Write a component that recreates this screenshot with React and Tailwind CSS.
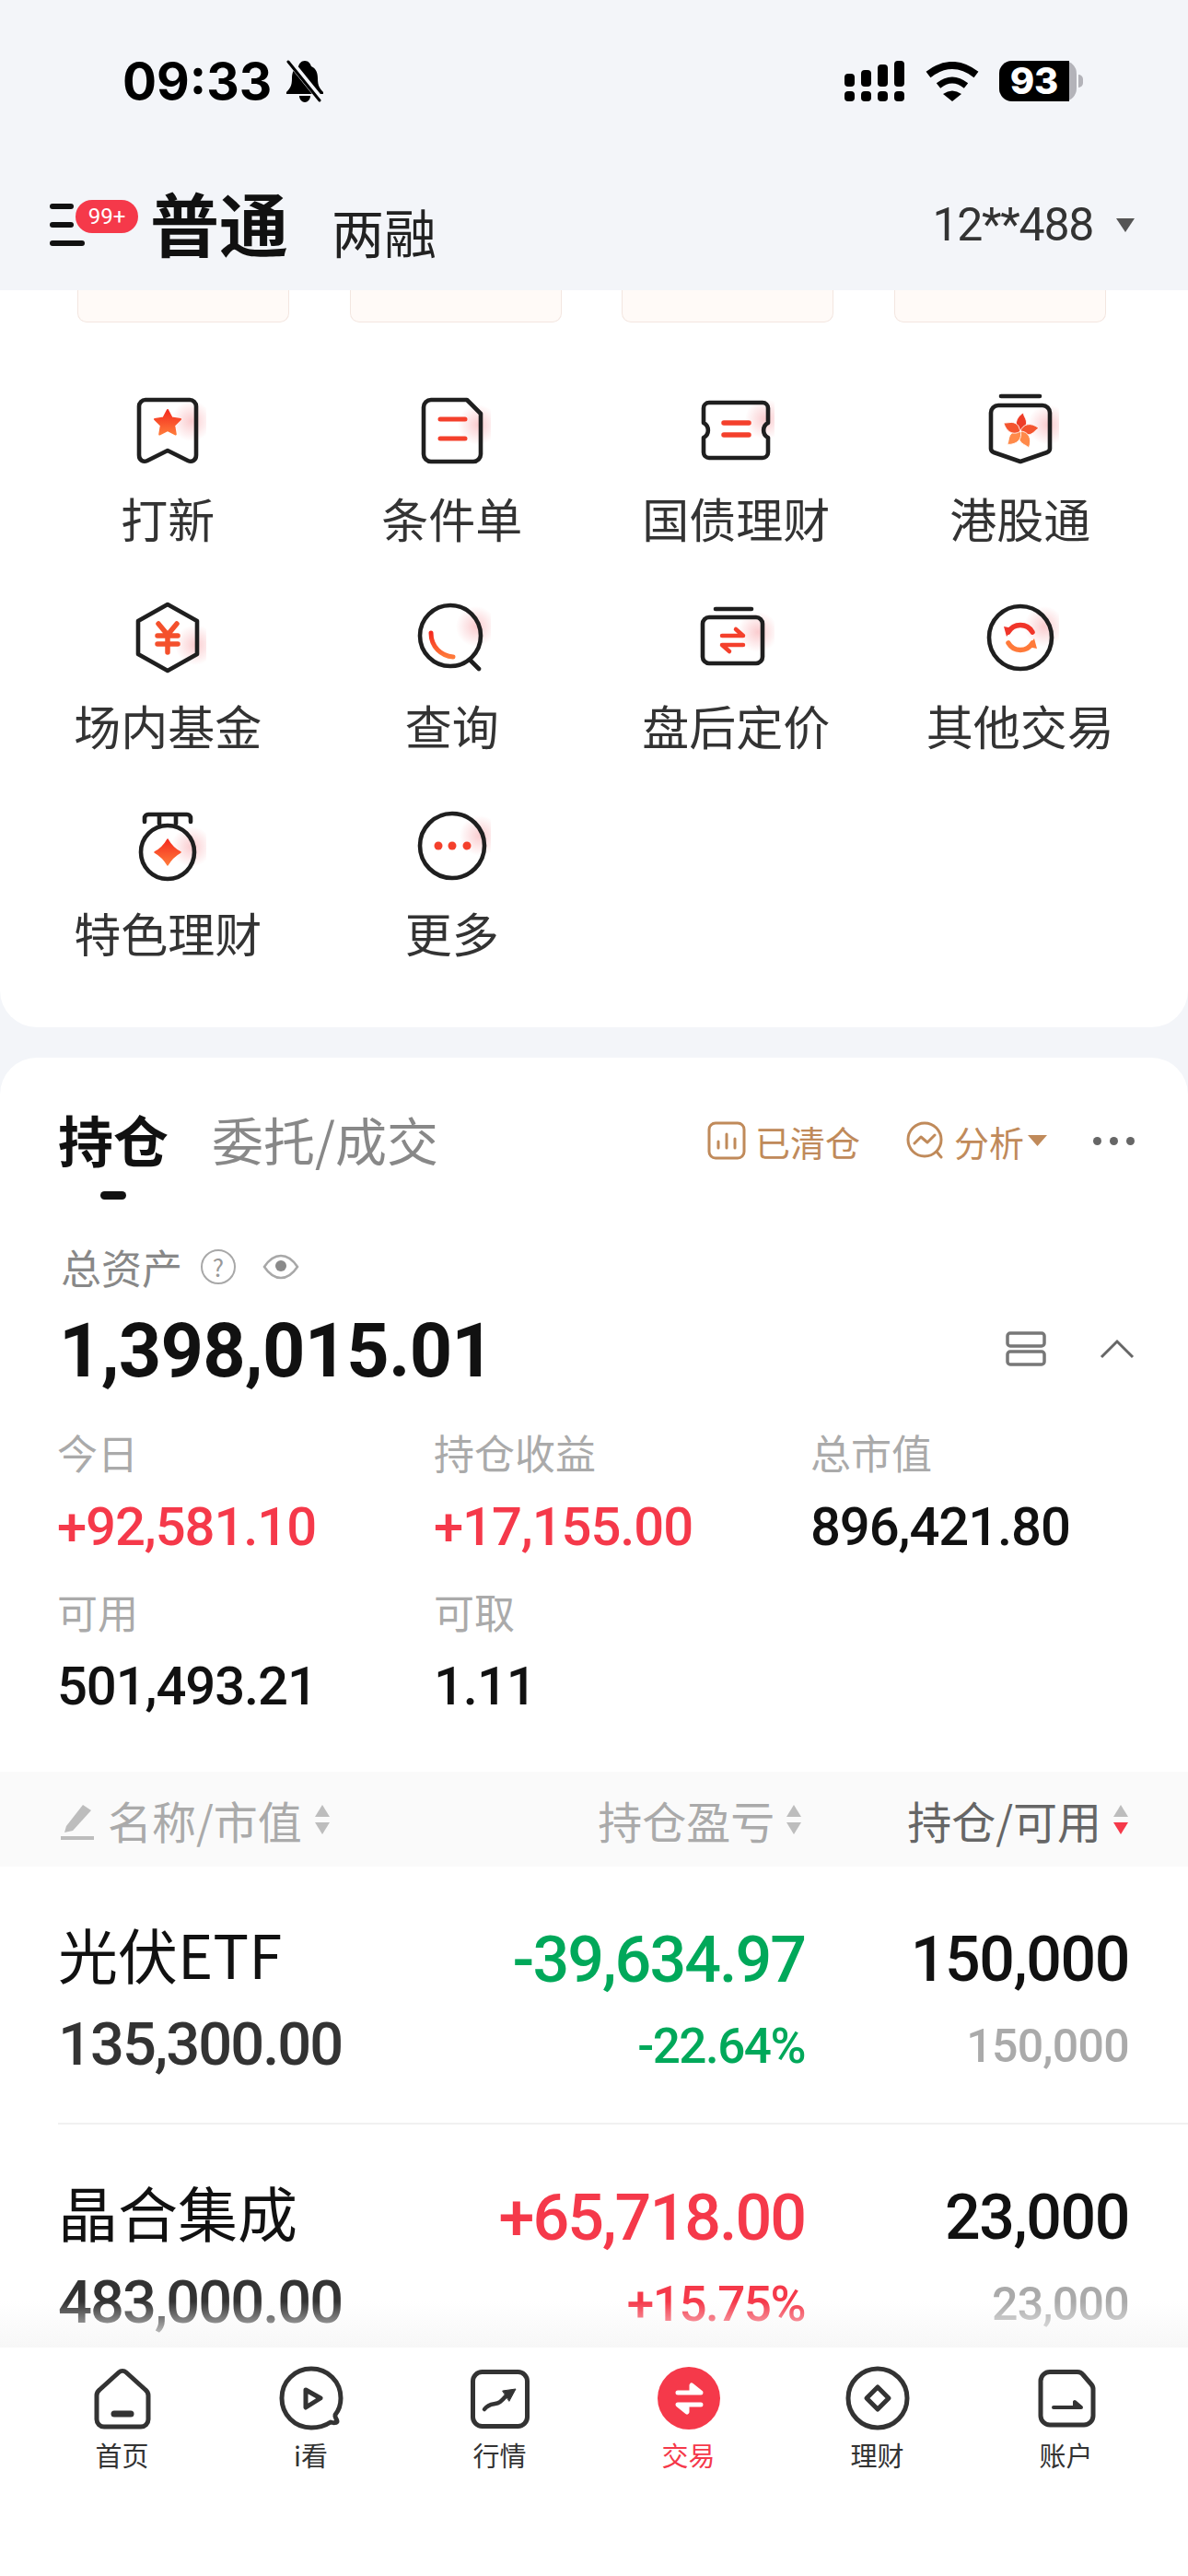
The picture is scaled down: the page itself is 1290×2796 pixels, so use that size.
import React from "react";

const NUM = "font-['Roboto','Noto_Sans_CJK_SC',sans-serif]";
const INK = "#1f1f1f";
const RED = "#f4402c";
const NAV = "#333333";
const SW = 4.6;

// shared gradients, referenced from the icons below
const Defs = () => (
  <svg className="absolute w-0 h-0" aria-hidden="true">
    <defs>
      <linearGradient id="hot" x1="0" y1="0" x2="0" y2="1">
        <stop offset="0" stopColor="#f42a1e" />
        <stop offset="1" stopColor="#ff7a3a" />
      </linearGradient>
      <radialGradient id="blush">
        <stop offset="0" stopColor="#f7a9ae" stopOpacity="0.6" />
        <stop offset="1" stopColor="#f7a9ae" stopOpacity="0" />
      </radialGradient>
    </defs>
  </svg>
);

const GridIcon = ({ blush = [70, 30], children }) => (
  <svg viewBox="0 0 84 84" className="w-[84px] h-[84px]" fill="none" strokeLinecap="round" strokeLinejoin="round">
    <circle cx={blush[0]} cy={blush[1]} r="22" fill="url(#blush)" />
    {children}
  </svg>
);

const Bookmark = () => (
  <GridIcon blush={[68, 32]}>
    <path d="M18 9H66a7 7 0 0 1 7 7V69c0 6-5 8-9 6L42 64 20 75c-4 2-9 0-9-6V16a7 7 0 0 1 7-7Z" stroke={INK} strokeWidth={SW} />
    <path d="M42 20l4.500 8.500 9.500 1.500-6.800 6.800 1.600 9.700L42 42l-8.800 4.500 1.600-9.700-6.800-6.800 9.500-1.500Z" fill="url(#hot)" stroke="url(#hot)" strokeWidth="2" />
  </GridIcon>
);

const Doc = () => (
  <GridIcon blush={[70, 36]}>
    <path d="M19 9H58L73 24V68a8 8 0 0 1-8 8H19a8 8 0 0 1-8-8V17a8 8 0 0 1 8-8Z" stroke={INK} strokeWidth={SW} />
    <path d="M29 30H56M29 51H56" stroke={RED} strokeWidth="5" />
  </GridIcon>
);

const Ticket = () => (
  <GridIcon blush={[74, 30]}>
    <path d="M13 12H71a6 6 0 0 1 6 6V34a9 9 0 0 0 0 16V66a6 6 0 0 1-6 6H13a6 6 0 0 1-6-6V50a9 9 0 0 0 0-16V18a6 6 0 0 1 6-6Z" stroke={INK} strokeWidth={SW} />
    <path d="M29 34H56M29 47H56" stroke={RED} strokeWidth="5.500" />
  </GridIcon>
);

const Bauhinia = () => {
  const petals = ["#ee3d28", "#f4552f", "#ff8a4a", "#ff8a4a", "#f4552f"];
  return (
    <GridIcon blush={[72, 36]}>
      <path d="M21 5H63" stroke={INK} strokeWidth={SW} />
      <path d="M18 15H66a8 8 0 0 1 8 8V62c0 2-1 3-3 4L42 76 13 66c-2-1-3-2-3-4V23a8 8 0 0 1 8-8Z" stroke={INK} strokeWidth={SW} />
      {petals.map((c, i) => (
        <path
          key={i}
          d="M42 43C35 38 36 29 45 23C46 28 50 31 48 37C47 40 44 41 42 43Z"
          fill={c}
          stroke="#ffffff"
          strokeWidth="0.800"
          transform={`rotate(${i * 72} 42 43)`}
        />
      ))}
    </GridIcon>
  );
};

const Hexagon = () => (
  <GridIcon blush={[72, 50]}>
    <path d="M42 6L74 24V60L42 78L10 60V24Z" stroke={INK} strokeWidth={SW} />
    <path d="M32 27L42 39L52 27M31 40H53M31 49H53M42 39V58" stroke="#f4502c" strokeWidth="5.500" />
  </GridIcon>
);

const Search = () => (
  <GridIcon blush={[68, 30]}>
    <circle cx="40" cy="40" r="33" stroke={INK} strokeWidth={SW} />
    <path d="M61 66L71 76" stroke={INK} strokeWidth={SW} />
    <path d="M19 37C19 52 30 62 43 63" stroke="url(#hot)" strokeWidth="5" />
  </GridIcon>
);

const Swap = () => (
  <GridIcon blush={[66, 36]}>
    <path d="M20 11H59" stroke={INK} strokeWidth={SW} />
    <rect x="6" y="20" width="65" height="50" rx="7" stroke={INK} strokeWidth={SW} />
    <path d="M27 40H50L42 33M50 50H27L35 57" stroke={RED} strokeWidth="4.500" />
  </GridIcon>
);

const Cycle = () => (
  <GridIcon blush={[68, 30]}>
    <circle cx="42" cy="42" r="34" stroke={INK} strokeWidth={SW} />
    <path d="M29 36A15 15 0 0 1 55 36" stroke="#f0352a" strokeWidth="5.500" />
    <path d="M24 30L34 32L27 41Z" fill="#f0352a" />
    <path d="M55 48A15 15 0 0 1 29 48" stroke="#ff7a3a" strokeWidth="5.500" />
    <path d="M60 54L50 52L57 43Z" fill="#ff7a3a" />
  </GridIcon>
);

const Medal = () => (
  <GridIcon blush={[68, 44]}>
    <path d="M17 17V13a4 4 0 0 1 4-4H63a4 4 0 0 1 4 4V17M33 9V19M51 9V19" stroke={INK} strokeWidth={SW} />
    <circle cx="42" cy="50" r="29" stroke={INK} strokeWidth={SW} />
    <path d="M42 36Q47 45 56 50Q47 55 42 64Q37 55 28 50Q37 45 42 36Z" fill="url(#hot)" stroke="url(#hot)" strokeWidth="1.500" />
  </GridIcon>
);

const More = () => (
  <GridIcon blush={[72, 32]}>
    <circle cx="42" cy="43" r="35" stroke={INK} strokeWidth={SW} />
    <circle cx="27" cy="43" r="4.500" fill={RED} />
    <circle cx="42" cy="43" r="4.500" fill={RED} />
    <circle cx="58" cy="43" r="4.500" fill={RED} />
  </GridIcon>
);

const quick = [
  ["打新", Bookmark],
  ["条件单", Doc],
  ["国债理财", Ticket],
  ["港股通", Bauhinia],
  ["场内基金", Hexagon],
  ["查询", Search],
  ["盘后定价", Swap],
  ["其他交易", Cycle],
  ["特色理财", Medal],
  ["更多", More],
];

const NavIcon = ({ children }) => (
  <svg viewBox="0 0 76 76" className="w-[76px] h-[76px]" fill="none" stroke={NAV} strokeWidth="5" strokeLinecap="round" strokeLinejoin="round">
    {children}
  </svg>
);

const tabs = [
  {
    label: "首页",
    icon: (
      <NavIcon>
        <path d="M34 9a6 6 0 0 1 8 0L63 28a8 8 0 0 1 3 6V60a8 8 0 0 1-8 8H18a8 8 0 0 1-8-8V34a8 8 0 0 1 3-6Z" />
        <path d="M29 54H47" strokeWidth="7" />
      </NavIcon>
    ),
  },
  {
    label: "i看",
    icon: (
      <NavIcon>
        <path d="M59 63C53 67 46 69 38 69C20 69 6 55 6 37S20 5 38 5S70 19 70 37C70 44 68 50 64 55C63 58 66 60 66 62C66 64 62 64 59 63Z" />
        <path d="M32 28L48 37L32 47Z" />
      </NavIcon>
    ),
  },
  {
    label: "行情",
    icon: (
      <NavIcon>
        <rect x="8.500" y="8.500" width="59" height="59" rx="10" />
        <path d="M21 49C27 41 33 45 38 41C42 38 43 36 46 33" strokeWidth="4.500" />
        <path d="M41 29L55 27L48 40Z" fill={NAV} strokeWidth="1" />
      </NavIcon>
    ),
  },
  {
    label: "交易",
    active: true,
    icon: (
      <NavIcon>
        <circle cx="38" cy="37" r="34" fill="#f5394a" stroke="none" />
        <path d="M26 31H51L41 23V31M51 44H26L36 52V44" stroke="#ffffff" strokeWidth="5" fill="#ffffff" />
      </NavIcon>
    ),
  },
  {
    label: "理财",
    icon: (
      <NavIcon>
        <circle cx="38" cy="37" r="32" />
        <path d="M38 25L50 37L38 49L26 37Z" />
      </NavIcon>
    ),
  },
  {
    label: "账户",
    icon: (
      <NavIcon>
        <path d="M20 8.500H50a8 8 0 0 1 6 3L65 22a8 8 0 0 1 2 6V56a10 10 0 0 1-10 10H20A10 10 0 0 1 10 56V18A10 10 0 0 1 20 8.500Z" />
        <path d="M24 47H54L47 41V47" strokeWidth="4" fill={NAV} />
      </NavIcon>
    ),
  },
];

const stats = [
  ["今日", "+92,581.10", "text-[#f5394a]"],
  ["持仓收益", "+17,155.00", "text-[#f5394a]"],
  ["总市值", "896,421.80", "text-[#111111]"],
  ["可用", "501,493.21", "text-[#111111]"],
  ["可取", "1.11", "text-[#111111]"],
];

const holdings = [
  {
    name: "光伏ETF",
    value: "135,300.00",
    profit: "-39,634.97",
    rate: "-22.64%",
    qty: "150,000",
    color: "text-[#00a85a]",
  },
  {
    name: "晶合集成",
    value: "483,000.00",
    profit: "+65,718.00",
    rate: "+15.75%",
    qty: "23,000",
    color: "text-[#f5394a]",
  },
];

const SortIcon = ({ red }) => (
  <svg viewBox="0 0 18 34" className="w-[18px] h-[34px]">
    <path d="M9 1L17 14H1Z" fill="#bdbdbd" />
    <path d="M1 20H17L9 33Z" fill={red ? "#f5394a" : "#bdbdbd"} />
  </svg>
);

const StatusBar = () => (
  <div className="h-[176px] flex items-center pl-[133px] pr-[114px] justify-between">
    <div className="flex items-center gap-[14px]">
      <span className="font-['Inter',sans-serif] font-bold text-[55px] leading-none text-black">09:33</span>
      <svg viewBox="0 0 44 46" className="w-[44px] h-[46px]">
        <path d="M22 1C26 1 28 4 29 7C34 9 36 14 36 20C36 28 38 31 42 35V37H2V35C6 31 8 28 8 20C8 14 10 9 15 7C16 4 18 1 22 1Z" fill="#000000" />
        <path d="M16 39H28C28 43 25 46 22 46C19 46 16 43 16 39Z" fill="#000000" />
        <path d="M6 2L40 44" stroke="#f3f5f9" strokeWidth="7" />
        <path d="M4 2L38 44" stroke="#000000" strokeWidth="3" strokeLinecap="round" />
      </svg>
    </div>
    <div className="flex items-center">
      <svg viewBox="0 0 66 44" className="w-[66px] h-[44px]">
        <rect x="0" y="14" width="11" height="14" rx="4" />
        <rect x="18" y="10" width="11" height="18" rx="4" />
        <rect x="36" y="4" width="11" height="24" rx="4" />
        <rect x="54" y="0" width="11" height="28" rx="4" />
        <rect x="0" y="33" width="11" height="11" rx="4" />
        <rect x="18" y="33" width="11" height="11" rx="4" />
        <rect x="36" y="33" width="11" height="11" rx="4" />
        <rect x="54" y="33" width="11" height="11" rx="4" />
      </svg>
      <svg viewBox="0 0 58 43" className="ml-[22px] w-[58px] h-[43px]" fill="none" stroke="#000000">
        <path d="M3 14Q29 -6 55 14" strokeWidth="8" />
        <path d="M14 26Q29 14 44 26" strokeWidth="7" />
        <path d="M19 35Q29 28 39 35L29 43Z" fill="#000000" stroke="none" />
      </svg>
      <div className="ml-[22px] flex items-center gap-[2px]">
        <div className="w-[84px] h-[44px] rounded-[14px] bg-[#b3b3b9]">
          <div className="w-[76px] h-[44px] bg-black rounded-l-[14px] flex items-center justify-center font-['Inter',sans-serif] font-extrabold text-[40px] text-white leading-[44px]">
            93
          </div>
        </div>
        <div className="w-[5px] h-[14px] bg-[#b3b3b9] rounded-r-[5px]"></div>
      </div>
    </div>
  </div>
);

const TitleBar = () => (
  <div className="h-[139px] flex items-center pl-[54px] pr-[58px] relative">
    <div className="w-[38px] flex flex-col gap-[14px] -mt-[4px]">
      <div className="h-[6px] w-[26px] rounded-full bg-[#111111]"></div>
      <div className="h-[6px] w-[26px] rounded-full bg-[#111111]"></div>
      <div className="h-[6px] w-[38px] rounded-full bg-[#111111]"></div>
    </div>
    <div className={`absolute left-[82px] top-[41px] w-[68px] h-[36px] rounded-[18px] bg-[#f5394a] text-white text-[24px] leading-[36px] text-center ${NUM}`}>
      99+
    </div>
    <span className="ml-[71px] text-[75px] font-bold leading-none text-[#111111] -mt-[11px]">普通</span>
    <span className="ml-[47px] text-[57px] leading-none text-[#222222] mt-[9px]">两融</span>
    <div className="ml-auto flex items-center gap-[25px] -mt-[3px]">
      <span className={`text-[50px] leading-none text-[#333333] tracking-[-1.300px] ${NUM}`}>12**488</span>
      <svg viewBox="0 0 20 15" className="w-[20px] h-[15px]">
        <path d="M0 0H20L10 15Z" fill="#555555" />
      </svg>
    </div>
  </div>
);

const QuickCard = () => (
  <section className="bg-white rounded-b-[40px] pb-[70px]">
    <div className="flex justify-between pl-[84px] pr-[89px]">
      {[0, 1, 2, 3].map((i) => (
        <div key={i} className="w-[230px] h-[35px] bg-[#fffaf7] border border-t-0 border-[#f3e6e0] rounded-b-[10px]"></div>
      ))}
    </div>
    <div className="mt-[75px] px-[28px] grid grid-cols-4 gap-y-[55px]">
      {quick.map(([label, Icon]) => (
        <div key={label} className="flex flex-col items-center">
          <Icon />
          <span className="mt-[23px] mb-[3px] text-[51px] leading-[60px] text-[#333333]">{label}</span>
        </div>
      ))}
    </div>
  </section>
);

const HoldingsCard = () => (
  <section className="mt-[33px] bg-white rounded-t-[40px] pt-[50px]">
    <div className="pl-[63px] pr-[58px] flex items-start">
      <div className="flex flex-col items-center">
        <span className="text-[60px] leading-[76px] font-bold text-[#111111]">持仓</span>
        <div className="mt-[19px] w-[28px] h-[9px] rounded-full bg-[#111111]"></div>
      </div>
      <span className="ml-[47px] text-[56px] leading-[76px] text-[#888888]">委托/成交</span>
      <div className="ml-auto h-[80px] flex items-center text-[38px] text-[#c08a5a]">
        <svg viewBox="0 0 42 42" className="w-[42px] h-[42px]" fill="none" stroke="#c08a5a" strokeWidth="3" strokeLinecap="round">
          <rect x="2" y="2" width="38" height="38" rx="7" />
          <path d="M12 22V29M21 14V29M30 19V29" />
        </svg>
        <span className="ml-[10px]">已清仓</span>
        <svg viewBox="0 0 42 42" className="ml-[49px] w-[42px] h-[42px]" fill="none" stroke="#c08a5a" strokeWidth="3" strokeLinecap="round" strokeLinejoin="round">
          <circle cx="21" cy="20" r="18" />
          <path d="M34 33L39 39M10 24L17 17L24 23L32 15" />
        </svg>
        <span className="ml-[11px]">分析</span>
        <svg viewBox="0 0 21 12" className="ml-[4px] w-[21px] h-[12px]">
          <path d="M0 0H21L10.500 12Z" fill="#c08a5a" />
        </svg>
        <div className="ml-[50px] flex gap-[9px]">
          <div className="w-[9px] h-[9px] rounded-full bg-[#666666]"></div>
          <div className="w-[9px] h-[9px] rounded-full bg-[#666666]"></div>
          <div className="w-[9px] h-[9px] rounded-full bg-[#666666]"></div>
        </div>
      </div>
    </div>

    <div className="mt-[48px] pl-[66px] h-[50px] flex items-center">
      <span className="text-[44px] leading-[50px] text-[#888888]">总资产</span>
      <div className="ml-[20px] w-[38px] h-[38px] rounded-full border-2 border-[#a8a8a8] flex items-center justify-center text-[26px] leading-none text-[#999999]">?</div>
      <svg viewBox="0 0 40 30" className="ml-[29px] w-[40px] h-[30px]" fill="none">
        <path d="M2 15C8 6 14 3 20 3S32 6 38 15C32 24 26 27 20 27S8 24 2 15Z" stroke="#a8a8a8" strokeWidth="2.500" />
        <circle cx="20" cy="14" r="6" fill="#8a8a8a" />
      </svg>
    </div>

    <div className="mt-[22px] pl-[64px] pr-[58px] h-[90px] flex items-center">
      <span className={`text-[81px] leading-[90px] font-bold text-[#111111] tracking-[-0.800px] ${NUM}`}>1,398,015.01</span>
      <svg viewBox="0 0 44 38" className="ml-auto -mt-[6px] w-[44px] h-[38px]" fill="none" stroke="#777777" strokeWidth="3.500">
        <rect x="2" y="2" width="40" height="14" rx="3" />
        <rect x="2" y="22" width="40" height="14" rx="3" />
      </svg>
      <svg viewBox="0 0 38 22" className="ml-[58px] -mt-[6px] w-[38px] h-[22px]" fill="none" stroke="#666666" strokeWidth="3">
        <path d="M2 20L19 3L36 20" />
      </svg>
    </div>

    <div className="mt-[36px] pl-[62px] grid grid-cols-[409px_409px_1fr] gap-y-[24px]">
      {stats.map(([label, value, color]) => (
        <div key={label}>
          <div className="text-[44px] leading-[56px] text-[#aaaaaa]">{label}</div>
          <div className={`mt-[13px] text-[58px] leading-[80px] font-medium tracking-[-1.100px] ${NUM} ${color}`}>{value}</div>
        </div>
      ))}
    </div>

    <div className="mt-[53px] h-[103px] bg-[#fafafa] pl-[66px] pr-[64px] flex items-center text-[48px] text-[#aaaaaa]">
      <svg viewBox="0 0 36 44" className="w-[36px] h-[44px]">
        <path d="M6 29L24 6L33 12L13 34L4 36Z" fill="#bdbdbd" />
        <rect x="0" y="40" width="36" height="4" fill="#bdbdbd" />
      </svg>
      <span className="ml-[15px]">名称/市值</span>
      <span className="ml-[13px]"><SortIcon /></span>
      <span className="ml-auto">持仓盈亏</span>
      <span className="ml-[12px]"><SortIcon /></span>
      <span className="ml-[114px] text-[#666666]">持仓/可用</span>
      <span className="ml-[12px]"><SortIcon red /></span>
    </div>

    <div className="ml-[63px] pr-[64px]">
      {holdings.map((h) => (
        <div key={h.name} className="flex pt-[52px] pb-[38px] border-b-2 border-[#f1f1f1] -mr-[64px] pr-[64px]">
          <div className="flex-1">
            <div className="text-[65px] leading-[84px] mb-[10px] text-[#111111]">{h.name}</div>
            <div className={`text-[65px] leading-[94px] font-medium text-[#333333] tracking-[-2px] ${NUM}`}>{h.value}</div>
          </div>
          <div className={`w-[340px] text-right ${NUM} ${h.color}`}>
            <div className="text-[70px] leading-[98px] font-medium tracking-[-2px]">{h.profit}</div>
            <div className="text-[53px] leading-[90px] font-medium tracking-[-1.500px]">{h.rate}</div>
          </div>
          <div className={`w-[352px] text-right ${NUM}`}>
            <div className="text-[68px] leading-[98px] font-medium text-[#111111] tracking-[-1.400px]">{h.qty}</div>
            <div className="text-[50px] leading-[90px] font-medium text-[#aaaaaa] tracking-[-0.700px]">{h.qty}</div>
          </div>
        </div>
      ))}
    </div>
  </section>
);

const BottomNav = () => (
  <nav className="h-[248px] bg-white pt-[18px] px-[30px] grid grid-cols-6 items-start">
    {tabs.map((t) => (
      <div key={t.label} className="flex flex-col items-center">
        {t.icon}
        <span className={`mt-[4px] text-[29px] leading-[36px] ${t.active ? "text-[#f5394a]" : "text-[#333333]"}`}>{t.label}</span>
      </div>
    ))}
  </nav>
);

export default function App() {
  return (
    <div className="w-[1290px] h-[2796px] flex flex-col overflow-hidden bg-[#f3f5f9] font-['Noto_Sans_CJK_SC',sans-serif]">
      <Defs />
      <StatusBar />
      <TitleBar />
      <main className="relative flex-1 overflow-hidden">
        <QuickCard />
        <HoldingsCard />
        <div className="absolute left-0 right-0 bottom-0 h-[50px] bg-gradient-to-b from-transparent to-[#f7f7f7]"></div>
      </main>
      <BottomNav />
    </div>
  );
}
